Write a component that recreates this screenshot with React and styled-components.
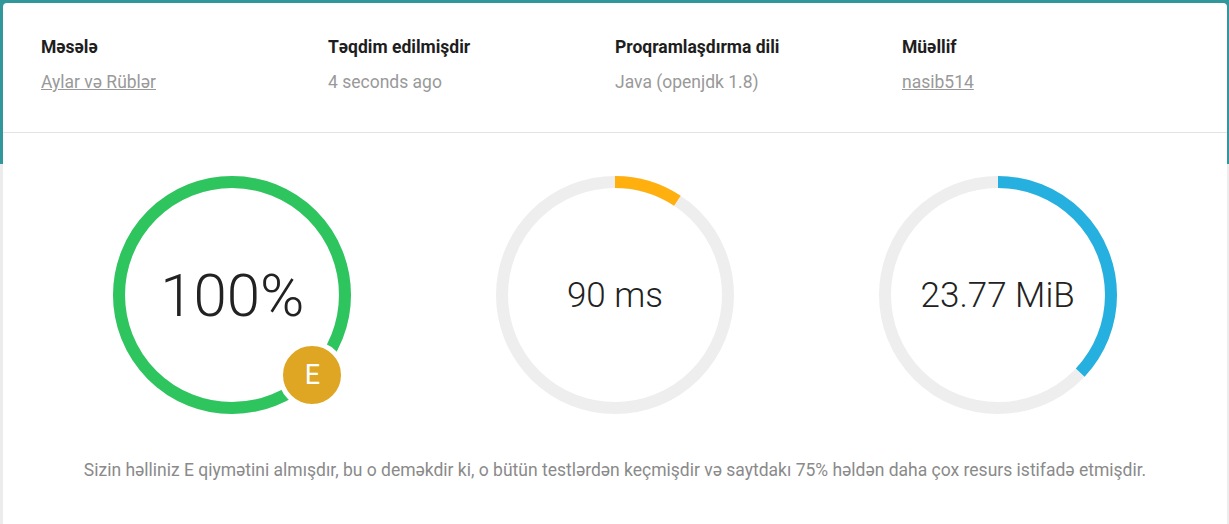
import styled, { createGlobalStyle } from 'styled-components'

const GlobalStyle = createGlobalStyle`
  body {
    margin: 0;
    background: #ececec;
    font-family: Roboto, "Noto Sans", sans-serif;
  }
`

const Page = styled.div`
  min-height: 524px;
  padding: 3px 2px 0 3px;
  background: linear-gradient(to bottom, #31979a 0, #31979a 164px, #ececec 164px);
`

const Card = styled.div`
  background: #fff;
  border-radius: 4px;
  min-height: 560px;
`

const Header = styled.div`
  display: grid;
  grid-template-columns: repeat(4, 1fr);
  padding: 34px 38px 40px;
  border-bottom: 1px solid #e3e3e3;
`

const Field = styled.div`
  display: flex;
  flex-direction: column;
  gap: 15px;
`

const Label = styled.div`
  font-size: 17.5px;
  line-height: 20px;
  font-weight: 700;
  color: #1e1e1e;
`

const Value = styled.div`
  font-size: 17.5px;
  line-height: 20px;
  color: #999;
`

const Link = styled.a`
  font-size: 17.5px;
  line-height: 20px;
  color: #999;
  text-decoration: underline;
  cursor: pointer;
`

const Stats = styled.div`
  display: grid;
  grid-template-columns: repeat(3, 1fr);
  padding: 43px 38px 0;
`

const Cell = styled.div`
  display: flex;
  justify-content: center;
`

const Ring = styled.div`
  position: relative;
  width: 238px;
  height: 238px;
  display: flex;
  align-items: center;
  justify-content: center;
`

const RingSvg = styled.svg`
  position: absolute;
  inset: 0;
  transform: rotate(-90deg);
`

const RingText = styled.span`
  position: relative;
  font-size: ${p => p.$size}px;
  font-weight: 300;
  color: #222;
`

const Badge = styled.div`
  position: absolute;
  left: 165px;
  top: 165px;
  width: 58px;
  height: 58px;
  border: 5px solid #fff;
  border-radius: 50%;
  background: #dfa624;
  color: #fff;
  font-size: 27px;
  font-weight: 400;
  display: flex;
  align-items: center;
  justify-content: center;
`

const Note = styled.p`
  margin: 45px 0 0;
  text-align: center;
  font-size: 17.5px;
  line-height: 22px;
  color: #8a8a8a;
`

const R = 113
const C = 2 * Math.PI * R

function Gauge({ value, color, text, size, children }) {
  return (
    <Ring>
      <RingSvg width="238" height="238" viewBox="0 0 238 238">
        <circle cx="119" cy="119" r={R} fill="none" stroke="#eeeeee" strokeWidth="12" />
        <circle
          cx="119"
          cy="119"
          r={R}
          fill="none"
          stroke={color}
          strokeWidth="12"
          strokeDasharray={`${C * value} ${C}`}
        />
      </RingSvg>
      <RingText $size={size}>{text}</RingText>
      {children}
    </Ring>
  )
}

export default function App() {
  return (
    <>
      <GlobalStyle />
      <Page>
        <Card>
          <Header>
            <Field>
              <Label>Məsələ</Label>
              <div><Link>Aylar və Rüblər</Link></div>
            </Field>
            <Field>
              <Label>Təqdim edilmişdir</Label>
              <Value>4 seconds ago</Value>
            </Field>
            <Field>
              <Label>Proqramlaşdırma dili</Label>
              <Value>Java (openjdk 1.8)</Value>
            </Field>
            <Field>
              <Label>Müəllif</Label>
              <div><Link>nasib514</Link></div>
            </Field>
          </Header>
          <Stats>
            <Cell>
              <Gauge value={1} color="#2ec55f" text="100%" size={60}>
                <Badge>E</Badge>
              </Gauge>
            </Cell>
            <Cell>
              <Gauge value={0.093} color="#ffb00f" text="90 ms" size={35} />
            </Cell>
            <Cell>
              <Gauge value={0.37} color="#25b0df" text="23.77 MiB" size={35} />
            </Cell>
          </Stats>
          <Note>
            Sizin həlliniz E qiymətini almışdır, bu o deməkdir ki, o bütün testlərdən keçmişdir və saytdakı 75% həldən daha çox resurs istifadə etmişdir.
          </Note>
        </Card>
      </Page>
    </>
  )
}
